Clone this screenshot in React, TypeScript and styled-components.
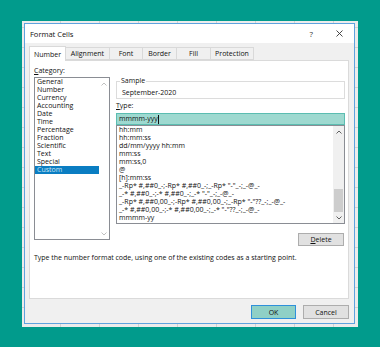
import styled, { createGlobalStyle } from "styled-components";

const GlobalStyle = createGlobalStyle`
  html, body { margin: 0; padding: 0; background: #019b8c; }
  body { font-family: "Open Sans", "Noto Sans", Arial, sans-serif; color: #111; }
`;

const Page = styled.div`
  width: 380px;
  height: 347px;
  box-sizing: border-box;
  padding: 21px 0 0 22px;
`;

const Sheet = styled.div`
  width: 336px;
  height: 306px;
  box-sizing: border-box;
  padding: 2px 3px 3px 2px;
  background-color: #ececec;
  background-image:
    repeating-linear-gradient(90deg, transparent 0 38px, #d2d2d2 38px 39px),
    repeating-linear-gradient(0deg, transparent 0 19px, #d2d2d2 19px 20px);
`;

const Dialog = styled.div`
  width: 331px;
  height: 301px;
  box-sizing: border-box;
  border: 1px solid #5fa3de;
  background: #f0f0f0;
  display: flex;
  flex-direction: column;
`;

const TitleBar = styled.div`
  height: 19px;
  background: #fff;
  display: flex;
  align-items: center;
  padding: 0 11px 0 5px;
  font-size: 7.6px;
  letter-spacing: -0.05px;
`;

const Title = styled.span`
  flex: 1;
`;

const TitleIcons = styled.div`
  display: flex;
  align-items: center;
  gap: 23px;
  color: #333;
  font-size: 8px;
`;

const Body = styled.div`
  padding: 4px 5px 0 4px;
  display: flex;
  flex-direction: column;
`;

const TabRow = styled.div`
  display: flex;
  align-items: flex-end;
  height: 13px;
`;

const Tab = styled.div<{ $w: number; $active?: boolean }>`
  width: ${({ $w }) => $w}px;
  height: ${({ $active }) => ($active ? 15 : 13)}px;
  box-sizing: border-box;
  margin-left: -1px;
  margin-bottom: ${({ $active }) => ($active ? -1 : 0)}px;
  border: 1px solid #d9d9d9;
  border-bottom: ${({ $active }) => ($active ? "none" : "1px solid #d9d9d9")};
  background: ${({ $active }) => ($active ? "#fff" : "#f0f0f0")};
  position: relative;
  z-index: ${({ $active }) => ($active ? 2 : 0)};
  display: flex;
  align-items: center;
  justify-content: center;
  font-size: 7px;
  &:first-child { margin-left: 0; }
`;

const Panel = styled.div`
  width: 320px;
  height: 239px;
  box-sizing: border-box;
  border: 1px solid #dadada;
  background: #fff;
  padding: 5px 3px 0 4px;
  display: flex;
  flex-direction: column;
`;

const TopRow = styled.div`
  display: flex;
  gap: 6px;
`;

const Column = styled.div<{ $w: number }>`
  width: ${({ $w }) => $w}px;
  display: flex;
  flex-direction: column;
`;

const Label = styled.div<{ $mb?: number; $mt?: number }>`
  font-size: 7px;
  line-height: 10px;
  height: 10px;
  margin-top: ${({ $mt }) => $mt ?? 0}px;
  margin-bottom: ${({ $mb }) => $mb ?? 0}px;
`;

const ListBox = styled.div<{ $h: number }>`
  height: ${({ $h }) => $h}px;
  box-sizing: border-box;
  border: 1px solid #8a8d94;
  display: flex;
  overflow: hidden;
  background: #fff;
`;

const Items = styled.div`
  flex: 1;
  display: flex;
  flex-direction: column;
  overflow: hidden;
`;

const Item = styled.div<{ $selected?: boolean }>`
  font-size: 7px;
  line-height: 8px;
  height: 8px;
  padding-left: 2px;
  white-space: nowrap;
  background: ${({ $selected }) => ($selected ? "#0a7dc2" : "transparent")};
  color: ${({ $selected }) => ($selected ? "#cde5f4" : "#111")};
  flex-shrink: 0;
`;

const ScrollBar = styled.div<{ $w: number; $track: string }>`
  width: ${({ $w }) => $w}px;
  background: ${({ $track }) => $track};
  display: flex;
  flex-direction: column;
`;

const Arrow = styled.div`
  height: 11px;
  display: flex;
  align-items: center;
  justify-content: center;
  flex-shrink: 0;
`;

const Track = styled.div`
  flex: 1;
  display: flex;
  flex-direction: column;
  justify-content: flex-end;
  padding: 0 1px;
`;

const Thumb = styled.div<{ $h: number }>`
  height: ${({ $h }) => $h}px;
  background: #cdcdcd;
`;

const SampleBox = styled.fieldset`
  margin: 10px 0 0 0;
  padding: 0 5px 0 5px;
  border: 1px solid #dcdcdc;
  min-width: 0;
`;

const Legend = styled.legend`
  font-size: 7px;
  line-height: 10px;
  padding: 0 1px;
  margin-left: -2px;
`;

const SampleValue = styled.div`
  font-size: 7px;
  line-height: 10px;
  margin-top: 2px;
`;

const TypeInput = styled.div`
  height: 12px;
  box-sizing: border-box;
  border: 1px solid #5bbdb1;
  background: #9ed9d0;
  font-size: 7px;
  line-height: 10px;
  padding-left: 2px;
  display: flex;
  align-items: center;
`;

const Caret = styled.span`
  display: inline-block;
  width: 1px;
  height: 9px;
  background: #111;
`;

const ButtonRow = styled.div<{ $mt: number; $pr: number; $gap?: number }>`
  display: flex;
  justify-content: flex-end;
  gap: ${({ $gap }) => $gap ?? 0}px;
  margin-top: ${({ $mt }) => $mt}px;
  padding-right: ${({ $pr }) => $pr}px;
`;

const Button = styled.div<{ $w: number; $h: number; $primary?: boolean }>`
  width: ${({ $w }) => $w}px;
  height: ${({ $h }) => $h}px;
  box-sizing: border-box;
  border: 1px solid ${({ $primary }) => ($primary ? "#2f90da" : "#adadad")};
  background: ${({ $primary }) => ($primary ? "#8fd0c6" : "#e1e1e1")};
  display: flex;
  align-items: center;
  justify-content: center;
  font-size: 7px;
`;

const Description = styled.div`
  font-size: 7px;
  letter-spacing: -0.02px;
  line-height: 10px;
  margin-top: 7px;
`;

const Chevron = ({ up, color = "#8a8a8a" }: { up?: boolean; color?: string }) => (
  <svg width="6" height="4" viewBox="0 0 6 4">
    <polyline
      points={up ? "0.5,3.5 3,1 5.5,3.5" : "0.5,0.5 3,3 5.5,0.5"}
      fill="none"
      stroke={color}
      strokeWidth="1"
    />
  </svg>
);

const categories = [
  "General", "Number", "Currency", "Accounting", "Date", "Time", "Percentage",
  "Fraction", "Scientific", "Text", "Special", "Custom",
];

const formats = [
  "hh:mm",
  "hh:mm:ss",
  "dd/mm/yyyy hh:mm",
  "mm:ss",
  "mm:ss,0",
  "@",
  "[h]:mm:ss",
  '_-Rp* #,##0_-;-Rp* #,##0_-;_-Rp* "-"_-;_-@_-',
  '_-* #,##0_-;-* #,##0_-;_-* "-"_-;_-@_-',
  '_-Rp* #,##0,00_-;-Rp* #,##0,00_-;_-Rp* "-"??_-;_-@_-',
  '_-* #,##0,00_-;-* #,##0,00_-;_-* "-"??_-;_-@_-',
  "mmmm-yy",
];

const tabs: [string, number][] = [
  ["Number", 37], ["Alignment", 45], ["Font", 34], ["Border", 35], ["Fill", 35], ["Protection", 44],
];

export default function App() {
  return (
    <Page>
      <GlobalStyle />
      <Sheet>
        <Dialog>
          <TitleBar>
            <Title>Format Cells</Title>
            <TitleIcons>
              <span>?</span>
              <svg width="7" height="7" viewBox="0 0 7 7">
                <path d="M0.5 0.5 L6.5 6.5 M6.5 0.5 L0.5 6.5" stroke="#333" strokeWidth="0.9" />
              </svg>
            </TitleIcons>
          </TitleBar>
          <Body>
            <TabRow>
              {tabs.map(([name, w], i) => (
                <Tab key={name} $w={w} $active={i === 0}>{name}</Tab>
              ))}
            </TabRow>
            <Panel>
              <TopRow>
                <Column $w={76}>
                  <Label $mb={1}><u>C</u>ategory:</Label>
                  <ListBox $h={163}>
                    <Items>
                      {categories.map((c) => (
                        <Item key={c} $selected={c === "Custom"}>{c}</Item>
                      ))}
                    </Items>
                    <ScrollBar $w={10} $track="#fff">
                      <Arrow><Chevron up color="#c0c0c0" /></Arrow>
                      <Track />
                      <Arrow><Chevron color="#c0c0c0" /></Arrow>
                    </ScrollBar>
                  </ListBox>
                </Column>
                <Column $w={229}>
                  <SampleBox>
                    <Legend>Sample</Legend>
                    <SampleValue>September-2020</SampleValue>
                  </SampleBox>
                  <Label $mt={2} $mb={2}><u>T</u>ype:</Label>
                  <TypeInput>mmmm-yyy<Caret /></TypeInput>
                  <ListBox $h={99}>
                    <Items>
                      {formats.map((f) => (
                        <Item key={f}>{f}</Item>
                      ))}
                    </Items>
                    <ScrollBar $w={11} $track="#f0f0f0">
                      <Arrow><Chevron up color="#606060" /></Arrow>
                      <Track><Thumb $h={23} /></Track>
                      <Arrow><Chevron color="#606060" /></Arrow>
                    </ScrollBar>
                  </ListBox>
                  <ButtonRow $mt={9} $pr={1}>
                    <Button $w={46} $h={13}><u>D</u>elete</Button>
                  </ButtonRow>
                </Column>
              </TopRow>
              <Description>
                Type the number format code, using one of the existing codes as a starting point.
              </Description>
            </Panel>
            <ButtonRow $mt={6} $pr={0} $gap={7}>
              <Button $w={45} $h={14} $primary>OK</Button>
              <Button $w={46} $h={14}>Cancel</Button>
            </ButtonRow>
          </Body>
        </Dialog>
      </Sheet>
    </Page>
  );
}
